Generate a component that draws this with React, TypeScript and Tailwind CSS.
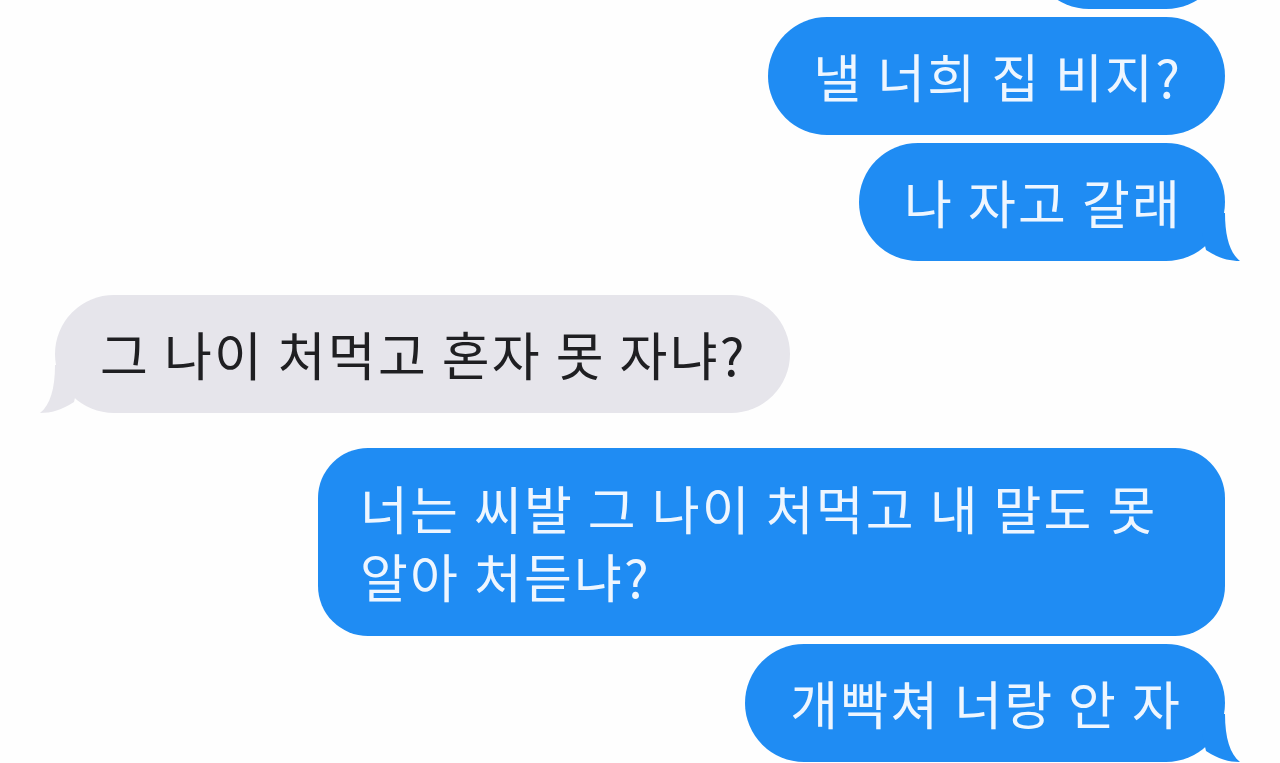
import React from 'react';

const BLUE = 'bg-[#1f8cf3]';

function Tail({ side, color }: { side: 'right' | 'left'; color: string }) {
  // iMessage style tail hanging off the bottom corner of a bubble
  const pos = side === 'right' ? 'right-[-19px]' : 'left-[-19px] -scale-x-100';
  return (
    <svg
      className={`absolute bottom-0 ${pos}`}
      width="42"
      height="48"
      viewBox="0 0 42 48"
    >
      <path d="M23 0 C23 24 28 40 38 48 C27 48 16 45 4 37 L0 20 L0 0 Z" fill={color} />
    </svg>
  );
}

function Bubble({
  text,
  me = true,
  tail = false,
  className = '',
}: {
  text: React.ReactNode;
  me?: boolean;
  tail?: boolean;
  className?: string;
}) {
  return (
    <div
      className={`relative pl-[45px] pr-[43px] py-[26px] text-[52px] leading-[66px] tracking-[2.2px] whitespace-nowrap ${
        me ? `${BLUE} text-[#eef6ff] self-end` : 'bg-[#e6e5eb] text-[#1f1f22] self-start'
      } ${className}`}
    >
      {text}
      {tail && <Tail side={me ? 'right' : 'left'} color={me ? '#1f8cf3' : '#e6e5eb'} />}
    </div>
  );
}

export default function App() {
  return (
    <div
      className="w-[1280px] h-[763px] overflow-hidden bg-[#fefefe] flex flex-col px-[55px]"
      style={{ fontFamily: '"Noto Sans CJK KR", "Noto Sans", sans-serif' }}
    >
      <div className={`self-end w-[195px] h-[118px] mt-[-109px] rounded-full ${BLUE}`} />
      <Bubble text="낼 너희 집 비지?" className="mt-[8px] rounded-[59px]" />
      <Bubble text="나 자고 갈래" tail className="mt-[8px] rounded-[59px]" />
      <Bubble text="그 나이 처먹고 혼자 못 자냐?" me={false} tail className="mt-[34px] rounded-[59px]" />
      <Bubble
        text={
          <>
            너는 씨발 그 나이 처먹고 내 말도 못
            <br />
            알아 처듣냐?
          </>
        }
        className="mt-[35px] w-[907px] !pl-[42px] !leading-[68px] rounded-[50px]"
      />
      <Bubble text="개빡쳐 너랑 안 자" tail className="mt-[8px] rounded-[59px]" />
    </div>
  );
}
